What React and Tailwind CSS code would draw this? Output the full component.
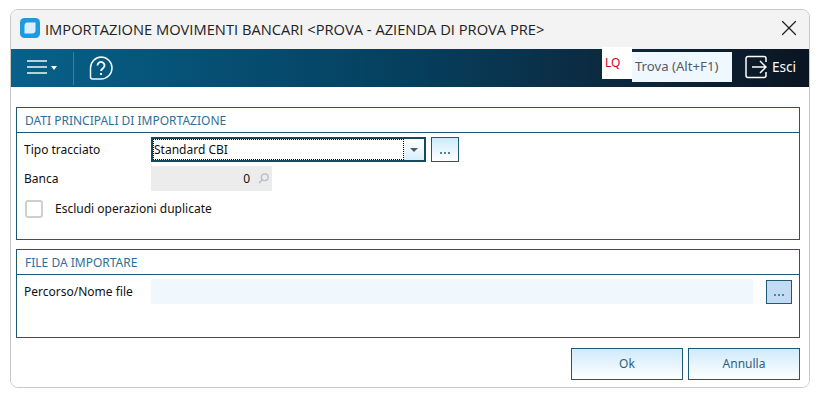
import { X } from 'lucide-react';

const tahoma = "font-['Noto_Sans',sans-serif] text-[12px] leading-none";

const DotsButton = ({ className }) => (
  <button className={`flex items-end justify-center border border-[#1f5a74] pb-[7px] ${className}`}>
    <span className="flex gap-[2px]">
      <i className="h-[2px] w-[2px] bg-[#4a86a6]" />
      <i className="h-[2px] w-[2px] bg-[#4a86a6]" />
      <i className="h-[2px] w-[2px] bg-[#4a86a6]" />
    </span>
  </button>
);

const Panel = ({ title, height, children }) => (
  <section className="flex flex-col border border-[#1f5a74]" style={{ height }}>
    <h2 className={`flex h-[25px] shrink-0 items-center border-b border-[#1f5a74] pl-[8px] pt-[2px] text-[12.2px] text-[#2f6f97] ${tahoma}`}>{title}</h2>
    <div className="flex-1">{children}</div>
  </section>
);

const App = () => {
  return (
    <div className="h-[406px] w-[837px] bg-white pl-[10px] pt-[9px]">
      <div className="flex h-[379px] w-[800px] flex-col overflow-hidden rounded-[8px] border border-[#c8c8c8]">
        {/* title bar */}
        <header className="flex h-[39px] shrink-0 items-center bg-[#f3f3f3] pl-[9px] pr-[7px]">
          <svg className="-mt-[3px]" width="20" height="20" viewBox="0 0 20 20">
            <rect width="20" height="20" rx="4.5" fill="#1e9be0" />
            <path d="M7.5 4.5h8v7.5q0 3.5-3.5 3.5H4.5V8q0-3.5 3-3.5z" fill="#d9f0fb" />
          </svg>
          <h1 className="ml-[5px] flex-1 font-['Open_Sans',sans-serif] text-[14.7px] leading-none text-[#222]">
            IMPORTAZIONE MOVIMENTI BANCARI &lt;PROVA - AZIENDA DI PROVA PRE&gt;
          </h1>
          <X className="-mt-[3px] h-[26px] w-[26px] text-[#222]" strokeWidth={1.1} />
        </header>

        {/* toolbar */}
        <div className="flex h-[38px] shrink-0 items-center bg-gradient-to-r from-[#07618a] via-[#053f5e] to-[#0a1522]">
          <div className="ml-[16px] flex items-center">
            <svg className="-mt-[2px]" width="20" height="16" viewBox="0 0 20 16" stroke="#f2f6f8" strokeWidth="1.6">
              <path d="M0 2h20M0 8h20M0 14h20" />
            </svg>
            <span className="ml-[4px] h-0 w-0 border-x-[3.5px] border-t-[4px] border-x-transparent border-t-white" />
          </div>
          <span className="ml-[16px] h-[33px] w-px bg-[#3d7f9f]" />
          <svg className="ml-[15px]" width="24" height="24" viewBox="0 0 24 24" fill="none" stroke="#f2f6f8" strokeWidth="1.5">
            <path d="M12 1a11 11 0 0 1 0 22H3.5a2 2 0 0 1-2-2v-9A11 11 0 0 1 12 1z" />
            <path d="M8.5 9.5a3.5 3.5 0 1 1 5.5 2.8c-1.2.8-2 1.3-2 2.7" strokeWidth="1.9" />
            <path d="M12 17v2" strokeWidth="2" />
          </svg>
          <div className="ml-auto flex items-start self-stretch">
            <div className="-mt-[2px] flex h-[32px] w-[30px] items-center bg-white pl-[3px] font-['Noto_Sans',sans-serif] text-[12px] text-[#d6001c]">LQ</div>
            <div className={`mt-[3px] flex h-[30px] w-[100px] items-center bg-[#eff8fe] pl-[3px] text-[13.2px] text-[#555a66] ${tahoma}`}>Trova (Alt+F1)</div>
            <svg className="ml-[13px] mt-[6px]" width="22" height="24" viewBox="0 0 22 24" fill="none" stroke="#fff" strokeWidth="1.5">
              <path d="M21 7V3.5a2 2 0 0 0-2-2H3a2 2 0 0 0-2 2v17a2 2 0 0 0 2 2h16a2 2 0 0 0 2-2V17" />
              <path d="M7 12h14M15 6l6 6-6 6" />
            </svg>
            <span className={`ml-[5px] mr-[13px] mt-[11px] text-[13.6px] text-white ${tahoma}`}>Esci</span>
          </div>
        </div>

        {/* content */}
        <main className="flex flex-1 flex-col gap-[9px] bg-white pl-[5px] pr-[9px] pt-[20px]">
          <Panel title="DATI PRINCIPALI DI IMPORTAZIONE" height={133}>
            <div className={`pl-[7px] pt-[4px] text-[#111] ${tahoma}`}>
              <div className="flex items-center">
                <span className="w-[127px]">Tipo tracciato</span>
                <div className="flex h-[25px] w-[275px] border-2 border-[#17475c]">
                  <div className="flex flex-1 items-center border border-dotted border-black">Standard CBI</div>
                  <div className="flex w-[20px] items-center justify-center bg-gradient-to-b from-white to-[#d8effb]">
                    <span className="h-0 w-0 border-x-[4px] border-t-[4px] border-x-transparent border-t-[#4a5a70]" />
                  </div>
                </div>
                <DotsButton className="ml-[5px] h-[25px] w-[28px] bg-gradient-to-b from-[#cfeafb] to-white" />
              </div>
              <div className="mt-[4px] flex items-center">
                <span className="w-[127px]">Banca</span>
                <div className="flex h-[25px] w-[121px] items-center justify-end bg-[#ececec] pr-[3px]">
                  <span>0</span>
                  <svg className="ml-[8px]" width="11" height="11" viewBox="0 0 11 11" fill="none" stroke="#b8bcc4" strokeWidth="1.3">
                    <circle cx="6.7" cy="4.3" r="3.4" />
                    <path d="M4.2 6.8 1 10" />
                  </svg>
                </div>
              </div>
              <div className="mt-[9px] flex items-center">
                <span className="ml-[1px] h-[18px] w-[18px] rounded-[3px] border-2 border-[#cfcfcf] bg-white" />
                <span className="ml-[12px]">Escludi operazioni duplicate</span>
              </div>
            </div>
          </Panel>

          <Panel title="FILE DA IMPORTARE" height={89}>
            <div className={`flex items-center pl-[7px] pt-[4px] text-[#111] ${tahoma}`}>
              <span className="w-[127px]">Percorso/Nome file</span>
              <div className="h-[25px] w-[602px] bg-[#f0f8fe]" />
              <DotsButton className="ml-[13px] h-[24px] w-[26px] bg-[#c3daf3]" />
            </div>
          </Panel>

          <div className="mt-[1px] flex justify-end gap-[5px]">
            <button className={`h-[32px] w-[112px] border border-[#1f5a74] bg-gradient-to-b from-[#cfeafb] to-white text-[#2b5f7c] ${tahoma}`}>Ok</button>
            <button className={`h-[32px] w-[112px] border border-[#1f5a74] bg-gradient-to-b from-[#cfeafb] to-white text-[#2b5f7c] ${tahoma}`}>Annulla</button>
          </div>
        </main>
      </div>
    </div>
  );
};

export default App;
